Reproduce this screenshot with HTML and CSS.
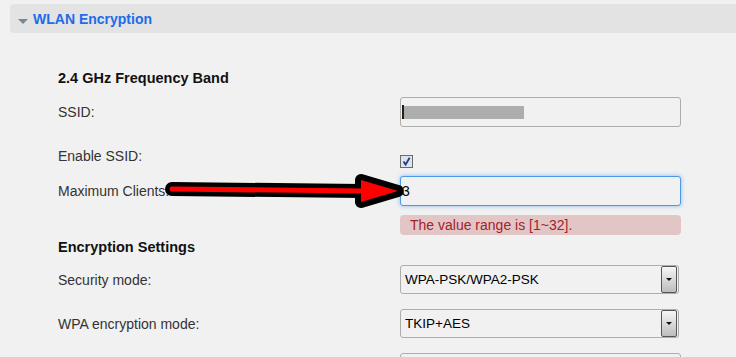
FILE: index.html
```html
<!DOCTYPE html>
<html lang="en">

<head>
    <meta charset="UTF-8">
    <meta name="viewport" content="width=device-width, initial-scale=1.0">
    <title>WLAN Encryption</title>

    <link rel="stylesheet" href="styles.css">
</head>

<body>

    <div class="panel-head">
        <span class="caret"></span>
        <span class="panel-title">WLAN Encryption</span>
    </div>

    <div class="panel-body">
        <h3 class="group-title band-title">2.4 GHz Frequency Band</h3>

        <div class="row row-ssid">
            <label>SSID:</label>
            <div class="field text-box">
                <span class="cursor"></span>
                <span class="masked"></span>
            </div>
        </div>

        <div class="row row-check">
            <label>Enable SSID:</label>
            <span class="check">
                <svg width="13" height="13" viewBox="0 0 13 13">
                    <rect x="0.5" y="0.5" width="12" height="12" fill="#dfe3ea" stroke="#6b6b6b"/>
                    <path d="M3.5 6.5 L5.6 9.6 L9.6 2.8" fill="none" stroke="#1b3a8e" stroke-width="1.8"/>
                </svg>
            </span>
        </div>

        <div class="row row-clients">
            <label>Maximum Clients:</label>
            <div class="field text-box focused">3</div>
        </div>

        <div class="error">The value range is [1~32].</div>

        <h3 class="group-title enc-title">Encryption Settings</h3>

        <div class="row row-select">
            <label>Security mode:</label>
            <div class="field select-box">
                <span class="select-text">WPA-PSK/WPA2-PSK</span>
                <span class="drop-btn"></span>
            </div>
        </div>

        <div class="row row-select row-wpa">
            <label>WPA encryption mode:</label>
            <div class="field select-box">
                <span class="select-text">TKIP+AES</span>
                <span class="drop-btn"></span>
            </div>
        </div>

        <div class="row row-last">
            <label></label>
            <div class="field text-box"></div>
        </div>
    </div>

    <!-- red arrow drawn over the form -->
    <svg class="arrow" width="736" height="357" viewBox="0 0 736 357">
        <path d="M172 189 L362 191" stroke="#000" stroke-width="14" stroke-linecap="round" fill="none"/>
        <polygon points="361,180 398,191 361,202" fill="#000" stroke="#000" stroke-width="12" stroke-linejoin="round"/>
        <path d="M172 189 L364 191" stroke="#f00" stroke-width="5" stroke-linecap="round" fill="none"/>
        <polygon points="361,180 398,191 361,202" fill="#f00"/>
    </svg>

</body>

</html>
```

FILE: styles.css
```css
html {
    height: 357px;
    overflow: hidden;
}

body {
    margin: 0;
    background: #f1f1f1;
    font: 14px "Liberation Sans", Arial, sans-serif;
    color: #333;
}

/* panel header */
.panel-head {
    display: flex;
    align-items: center;
    height: 29px;
    margin: 4px 0 0 10px;
    background: #e3e3e3;
    border-radius: 4px 0 0 4px;
}

.caret {
    align-self: flex-start;
    width: 0;
    height: 0;
    margin: 15px 5px 0 8px;
    border-left: 5px solid transparent;
    border-right: 5px solid transparent;
    border-top: 5px solid #778797;
}

.panel-title {
    font-weight: bold;
    color: #1d6ce8;
}

/* form body */
.panel-body {
    padding-left: 58px;
}

.group-title {
    margin: 35px 0 0;
    font-size: 14.5px;
    line-height: 20px;
    color: #111;
}

.enc-title {
    margin-top: 2px;
}

.row {
    display: flex;
    align-items: center;
}

.row label {
    width: 342px;
    flex: none;
}

.field {
    box-sizing: border-box;
    width: 281px;
    height: 30px;
    border: 1px solid #adadad;
    border-radius: 3px;
    background: #f1f1f1;
}

.text-box {
    display: flex;
    align-items: center;
    padding-left: 1px;
    color: #000;
}

.row-ssid {
    margin-top: 9px;
}

.cursor {
    width: 2px;
    height: 14px;
    background: #2a1d10;
}

.masked {
    width: 120px;
    height: 13px;
    background: #adadad;
}

.row-check {
    align-items: flex-start;
    margin-top: 20px;
    line-height: 18px;
}

.check {
    display: block;
    height: 13px;
    margin-top: 8px;
}

.check svg {
    display: block;
}

.row-clients {
    margin-top: 8px;
}

.focused {
    border-color: #4a98e6;
    box-shadow: 0 0 4px rgba(90, 160, 235, 0.7);
}

.error {
    box-sizing: border-box;
    width: 281px;
    height: 20px;
    margin: 9px 0 0 342px;
    padding-left: 10px;
    line-height: 20px;
    background: #e2c6c6;
    border-radius: 4px;
    color: #a6212a;
}

.row-select {
    margin-top: 8px;
}

.row-wpa {
    margin-top: 15px;
}

.select-box {
    display: flex;
    align-items: center;
    width: 279px;
    height: 29px;
    padding: 0 1px 0 4px;
}

.select-text {
    flex: 1;
    font-size: 13.5px;
    color: #000;
}

.drop-btn {
    position: relative;
    box-sizing: border-box;
    width: 16px;
    height: 27px;
    border: 1px solid #555;
    border-radius: 2px;
    background: linear-gradient(#f6f6f6, #bdbdbd);
}

.drop-btn::after {
    content: "";
    position: absolute;
    left: 4px;
    top: 11px;
    border-left: 3px solid transparent;
    border-right: 3px solid transparent;
    border-top: 3px solid #111;
}

.row-last {
    margin-top: 15px;
}

.arrow {
    position: absolute;
    left: 0;
    top: 0;
    pointer-events: none;
}
```
